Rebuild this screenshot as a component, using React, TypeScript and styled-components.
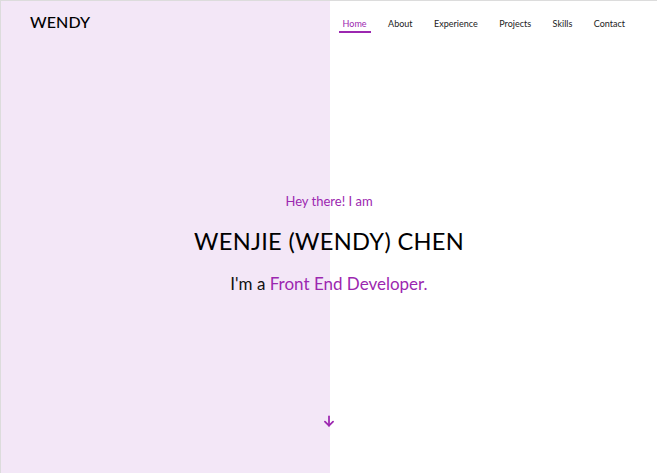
import React from 'react';
import styled, { createGlobalStyle } from 'styled-components';

const GlobalStyle = createGlobalStyle`
  html, body {
    margin: 0;
    padding: 0;
  }
  body {
    font-family: 'Lato', 'Noto Sans', sans-serif;
    color: #111;
  }
  * {
    box-sizing: border-box;
  }
`;

const Page = styled.div`
  height: 473px;
  display: flex;
  flex-direction: column;
  border-top: 1px solid #dcdcdc;
  border-left: 1px solid #dcdcdc;
  background: linear-gradient(to right, #f3e7f7 0, #f3e7f7 329px, #ffffff 329px);
`;

const Header = styled.header`
  display: flex;
  align-items: center;
  justify-content: space-between;
  padding: 12px 28px 0 29px;
  height: 40px;
`;

const Logo = styled.div`
  font-size: 16px;
  font-weight: 500;
  letter-spacing: 0.1px;
  color: #000;
  margin-top: -12px;
`;

const Nav = styled.nav`
  display: flex;
  gap: 13.5px;
  margin-top: -3px;
`;

const NavLink = styled.a<{ active?: boolean }>`
  font-size: 9px;
  color: ${p => (p.active ? '#9c27b0' : '#222')};
  text-decoration: none;
  padding: 0 4px 2px;
  border-bottom: 2px solid ${p => (p.active ? '#9c27b0' : 'transparent')};
`;

const Hero = styled.section`
  flex: 1;
  display: flex;
  flex-direction: column;
  align-items: center;
  padding-top: 152px;
`;

const Greeting = styled.p`
  margin: 0;
  font-size: 13px;
  color: #9c27b0;
`;

const Name = styled.h1`
  margin: 18px 0 0;
  font-size: 23.6px;
  font-weight: 400;
  letter-spacing: 0.3px;
  color: #000;
`;

const Role = styled.p`
  margin: 18px 0 0;
  font-size: 17px;
  color: #111;
`;

const Highlight = styled.span`
  color: #9c27b0;
`;

const ScrollDown = styled.div`
  margin-top: auto;
  margin-bottom: 45px;
  color: #9c27b0;
  display: flex;
`;

export default function App() {
  const links = ['Home', 'About', 'Experience', 'Projects', 'Skills', 'Contact'];
  return (
    <>
      <GlobalStyle />
      <Page>
        <Header>
          <Logo>WENDY</Logo>
          <Nav>
            {links.map((l, i) => (
              <NavLink key={l} active={i === 0}>
                {l}
              </NavLink>
            ))}
          </Nav>
        </Header>
        <Hero>
          <Greeting>Hey there! I am</Greeting>
          <Name>WENJIE (WENDY) CHEN</Name>
          <Role>
            I'm a <Highlight>Front End Developer.</Highlight>
          </Role>
          <ScrollDown>
            <svg width="14" height="14" viewBox="0 0 24 24" fill="none" stroke="currentColor" strokeWidth="3" strokeLinecap="round" strokeLinejoin="round">
              <path d="M12 4v16" />
              <path d="M5 13l7 7 7-7" />
            </svg>
          </ScrollDown>
        </Hero>
      </Page>
    </>
  );
}
